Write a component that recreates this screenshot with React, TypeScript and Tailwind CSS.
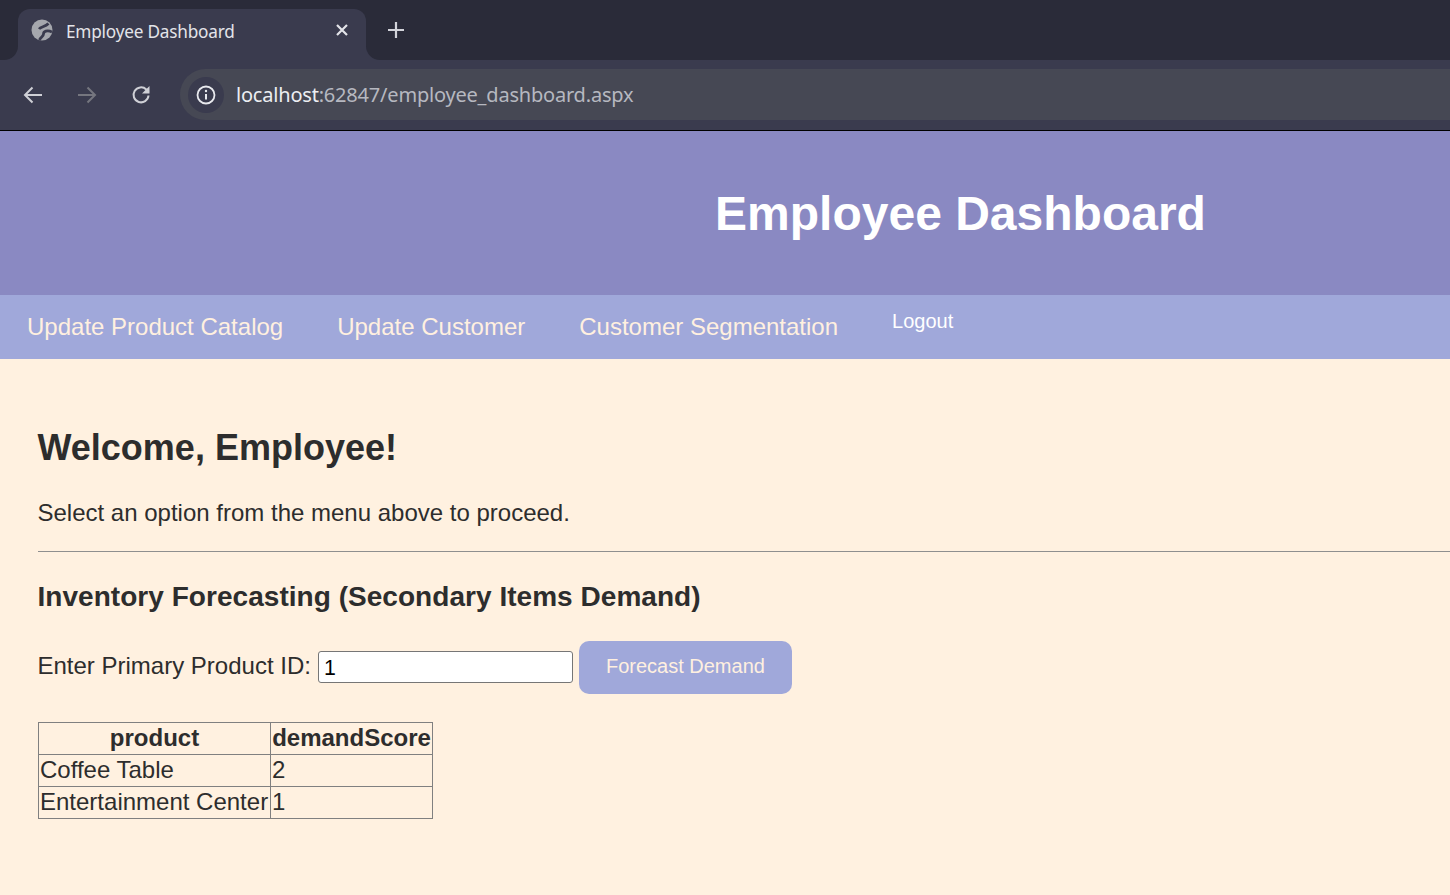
const sans = "font-['Liberation_Sans',Arial,sans-serif]";

function TabFlare({ side }: { side: "left" | "right" }) {
  // concave corner where the active tab meets the toolbar
  return side === "left" ? (
    <div className="absolute bottom-0 left-[-14px] h-[14px] w-[14px] bg-[#3a3b4e]">
      <div className="h-full w-full rounded-br-[14px] bg-[#2a2b39]" />
    </div>
  ) : (
    <div className="absolute bottom-0 right-[-14px] h-[14px] w-[14px] bg-[#3a3b4e]">
      <div className="h-full w-full rounded-bl-[14px] bg-[#2a2b39]" />
    </div>
  );
}

function BrowserChrome() {
  return (
    <div className="bg-[#2a2b39] font-['Noto_Sans',sans-serif]">
      {/* Tab strip */}
      <div className="flex h-[60px] items-start pl-[18px] pt-[9px]">
        <div className="relative flex h-[51px] w-[348px] items-start rounded-t-[12px] bg-[#3a3b4e] pl-[13px] pt-[10px]">
          <TabFlare side="left" />
          <TabFlare side="right" />
          <svg width="22" height="22" viewBox="0 0 22 22" className="shrink-0">
            <circle cx="11" cy="11" r="10.5" fill="#a5a7ad" />
            <path d="M8 10C10 7.500 14 8 17.500 4.500" fill="none" stroke="#3a3b4e" strokeWidth="2.800" />
            <path d="M21 13C16 10.500 12.500 12.500 12.500 15S9.500 18 8.500 21" fill="none" stroke="#3a3b4e" strokeWidth="2.800" />
          </svg>
          <span className="ml-[13px] text-[17.200px] leading-[26px] tracking-[-0.2px] text-[#e3e4e9]">Employee Dashboard</span>
          <svg width="12" height="12" viewBox="0 0 12 12" className="absolute left-[318px] top-[15px]">
            <path d="M1 1l10 10M11 1L1 11" stroke="#e3e4e9" strokeWidth="2.200" />
          </svg>
        </div>
        <svg width="16" height="16" viewBox="0 0 16 16" className="ml-[22px] mt-[13px]">
          <path d="M8 0v16M0 8h16" stroke="#d3d4da" strokeWidth="2.200" />
        </svg>
      </div>
      {/* Address row */}
      <div className="flex h-[70px] items-start bg-[#3a3b4e] pt-[9px]">
        <div className="flex h-[51px] w-[180px] shrink-0 items-center">
          <svg width="20" height="18" viewBox="0 0 20 18" className="ml-[23px]">
            <path d="M19 9H2M9.500 1.500 2 9l7.500 7.500" fill="none" stroke="#cfd0d6" strokeWidth="2" />
          </svg>
          <svg width="20" height="18" viewBox="0 0 20 18" className="ml-[34px]">
            <path d="M1 9h17M10.500 1.500 18 9l-7.500 7.500" fill="none" stroke="#75767f" strokeWidth="2" />
          </svg>
          <svg width="20" height="20" viewBox="0 0 20 20" className="ml-[34px]">
            <path d="M17.500 10.500a7.500 7.500 0 1 1-2.200-6L17.500 7" fill="none" stroke="#cfd0d6" strokeWidth="2" />
            <path d="M18.500 1v7.500H11z" fill="#cfd0d6" />
          </svg>
        </div>
        <div className="flex h-[51px] flex-1 items-center rounded-l-full bg-[#464854] pl-[8px]">
          <div className="flex h-[36px] w-[36px] items-center justify-center rounded-full bg-[#3a3b4e]">
            <svg width="20" height="20" viewBox="0 0 20 20">
              <circle cx="10" cy="10" r="8.500" fill="none" stroke="#e8e9ee" strokeWidth="1.800" />
              <path d="M10 9v5.500" stroke="#e8e9ee" strokeWidth="2" />
              <circle cx="10" cy="6" r="1.200" fill="#e8e9ee" />
            </svg>
          </div>
          <span className="ml-[12px] text-[20px] tracking-[-0.2px] text-[#b6b8c0]">
            <span className="text-[#eceef2]">localhost</span>:62847/employee_dashboard.aspx
          </span>
        </div>
      </div>
      <div className="h-px bg-black" />
    </div>
  );
}

function NavBar() {
  return (
    <nav className="flex h-16 bg-[#a0a8da] pl-[27px] text-[#fff0e0]">
      <a className="mt-[17px] text-[24px] leading-[30px]">Update Product Catalog</a>
      <a className="ml-[54px] mt-[17px] text-[24px] leading-[30px]">Update Customer</a>
      <a className="ml-[54px] mt-[17px] text-[24px] leading-[30px]">Customer Segmentation</a>
      <a className="ml-[54px] mt-[13px] text-[20px] leading-[26px] text-white">Logout</a>
    </nav>
  );
}

function ForecastTable() {
  const rows = [
    ["Coffee Table", "2"],
    ["Entertainment Center", "1"],
  ];
  return (
    <table className="ml-[0.500px] mt-[28px] border-collapse border border-[#808080] text-[24px] leading-[29px]">
      <thead>
        <tr>
          <th className="w-[232px] border border-[#808080] p-0 px-px pb-[2px] font-bold">product</th>
          <th className="w-[162px] border border-[#808080] p-0 px-px pb-[2px] font-bold">demandScore</th>
        </tr>
      </thead>
      <tbody>
        {rows.map(([product, score]) => (
          <tr key={product}>
            <td className="border border-[#808080] p-0 px-px pb-[2px]">{product}</td>
            <td className="border border-[#808080] p-0 px-px pb-[2px]">{score}</td>
          </tr>
        ))}
      </tbody>
    </table>
  );
}

export default function App() {
  return (
    <div className={`flex h-[895px] flex-col overflow-hidden bg-[#fff1e0] text-[#2d2d2d] ${sans}`}>
      <BrowserChrome />
      <header className="flex h-[164px] items-center justify-center bg-[#8a89c2] pl-[471px] pt-[2px]">
        <h1 className="text-[48px] font-bold leading-[56px] text-white">Employee Dashboard</h1>
      </header>
      <NavBar />
      <main className="pl-[37.500px]">
        <h2 className="mt-[67px] text-[36px] font-bold leading-[44px]">Welcome, Employee!</h2>
        <p className="mt-[27px] text-[24px] leading-[32px]">Select an option from the menu above to proceed.</p>
        <hr className="mt-[22px] border-[#8f8f8f]" />
        <h3 className="mt-[27px] text-[28px] font-bold leading-[36px] tracking-[0.04px]">Inventory Forecasting (Secondary Items Demand)</h3>
        <div className="mt-[26px] flex h-[53px] items-center text-[24px]">
          <label className="pb-[3px]">Enter Primary Product ID:</label>
          <input
            readOnly
            value="1"
            className="mb-[2px] ml-[7px] h-[32px] w-[255px] rounded-[3px] border border-[#767676] bg-white px-[5px] pt-[3px] text-[21.300px] text-black"
          />
          <button className="ml-[6px] h-[53px] w-[213px] rounded-[10px] bg-[#a0a8da] pb-[3px] text-[20px] text-[#fff0e0]">
            Forecast Demand
          </button>
        </div>
        <ForecastTable />
      </main>
    </div>
  );
}
